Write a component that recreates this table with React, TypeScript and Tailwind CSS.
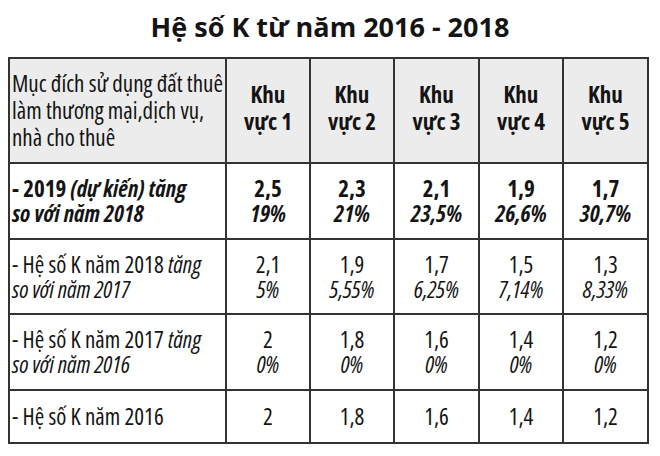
interface Row {
  label: React.ReactNode;
  bold?: boolean;
  h: string;
  cells: [string, string | null][];
}

const rows: Row[] = [
  {
    label: (
      <>
        - 2019 <i>(dự kiến) tăng</i>
        <br />
        <i>so với năm 2018</i>
      </>
    ),
    bold: true,
    h: "h-[76px]",
    cells: [
      ["2,5", "19%"],
      ["2,3", "21%"],
      ["2,1", "23,5%"],
      ["1,9", "26,6%"],
      ["1,7", "30,7%"],
    ],
  },
  {
    label: (
      <>
        - Hệ số K năm 2018 <i>tăng</i>
        <br />
        <i>so với năm 2017</i>
      </>
    ),
    h: "h-[75px]",
    cells: [
      ["2,1", "5%"],
      ["1,9", "5,55%"],
      ["1,7", "6,25%"],
      ["1,5", "7,14%"],
      ["1,3", "8,33%"],
    ],
  },
  {
    label: (
      <>
        - Hệ số K năm 2017 <i>tăng</i>
        <br />
        <i>so với năm 2016</i>
      </>
    ),
    h: "h-[76px]",
    cells: [
      ["2", "0%"],
      ["1,8", "0%"],
      ["1,6", "0%"],
      ["1,4", "0%"],
      ["1,2", "0%"],
    ],
  },
  {
    label: <>- Hệ số K năm 2016</>,
    h: "h-[53px]",
    cells: [
      ["2", null],
      ["1,8", null],
      ["1,6", null],
      ["1,4", null],
      ["1,2", null],
    ],
  },
];

export default function App() {
  return (
    <div className="w-[660px] h-[456px] bg-white text-[#141414] font-['Open_Sans',sans-serif]">
      <h1 className="h-[57px] pt-[8px] text-center text-[27px] font-bold leading-[37px]">
        Hệ số K từ năm 2016 - 2018
      </h1>
      <div className="ml-[8px] grid w-[641px] grid-cols-[217px_84px_84px_85px_84px_85px] border-l-2 border-t-2 border-[#333] font-stretch-condensed text-[23px]">
        <div className="flex h-[105px] items-center border-b-2 border-r-2 border-[#333] bg-[#ececec] pl-[2px] leading-[27px]">
          Mục đích sử dụng đất thuê làm thương mại,dịch vụ, nhà cho thuê
        </div>
        {[1, 2, 3, 4, 5].map((n) => (
          <div
            key={n}
            className="flex h-[105px] items-center justify-center border-b-2 border-r-2 border-[#333] bg-[#ececec] pb-[6px] text-center font-bold leading-[27px]"
          >
            Khu
            <br />
            vực {n}
          </div>
        ))}
        {rows.map((r, i) => (
          <div key={i} className="contents">
            <div
              className={`flex ${r.h} items-center border-b-2 border-r-2 border-[#333] pl-[2px] leading-[25px] ${r.bold ? "font-bold" : ""}`}
            >
              <div>{r.label}</div>
            </div>
            {r.cells.map(([v, p], j) => (
              <div
                key={j}
                className={`flex ${r.h} flex-col items-center justify-center border-b-2 border-r-2 border-[#333] leading-[25px] ${r.bold ? "font-bold" : ""}`}
              >
                <span>{v}</span>
                {p && <i>{p}</i>}
              </div>
            ))}
          </div>
        ))}
      </div>
    </div>
  );
}
